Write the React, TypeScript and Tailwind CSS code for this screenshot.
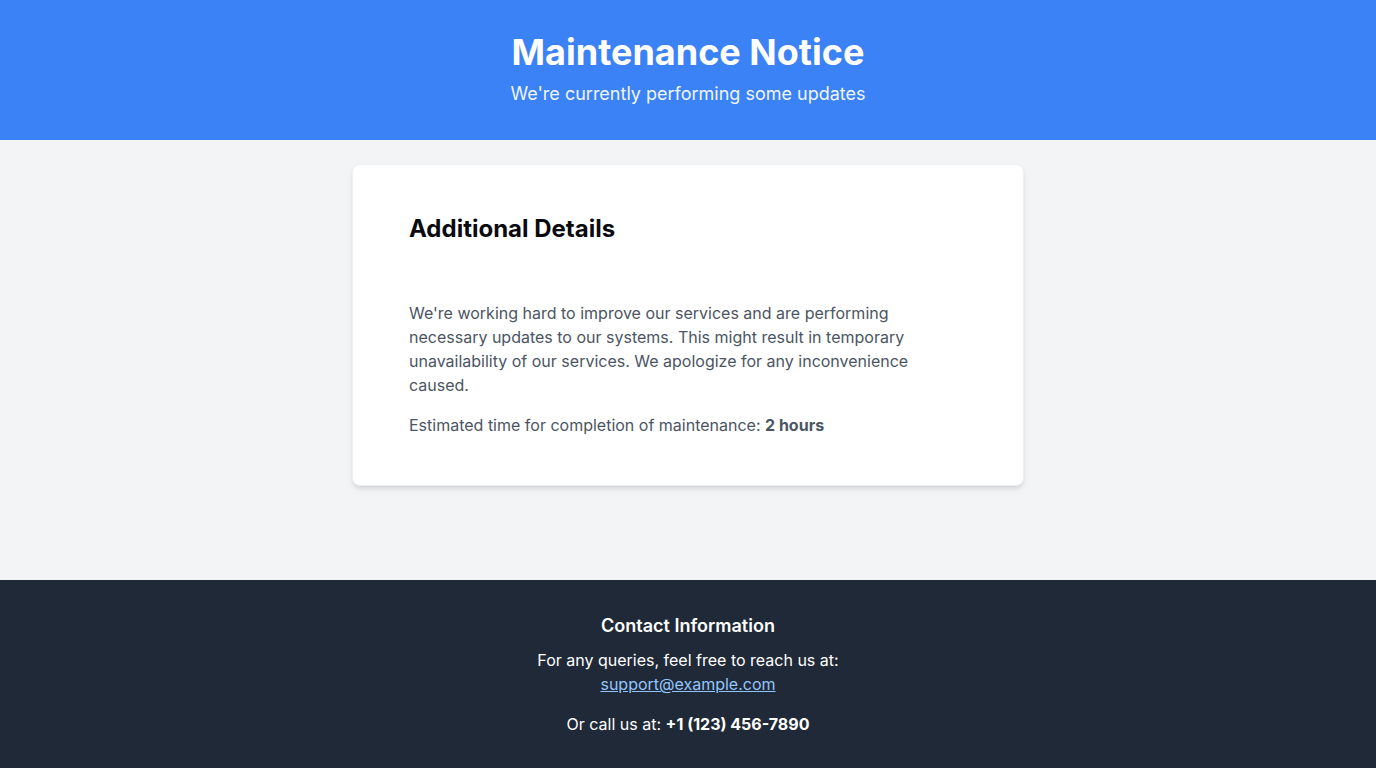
import React from "react";

export default function App() {
  return (
    <div className="min-h-screen flex flex-col bg-[#f3f4f6]" style={{ fontFamily: "Inter, 'Noto Sans', sans-serif" }}>
      <header className="bg-[#3b82f6] text-white py-8 text-center">
        <h1 className="text-4xl font-bold">Maintenance Notice</h1>
        <p className="mt-2 text-lg text-[#eff6ff]">We're currently performing some updates</p>
      </header>
      <main className="flex-1 py-6 px-4">
        <div className="max-w-2xl mx-auto bg-white rounded-lg shadow-md border border-[#eef0f3] p-8">
          <div className="px-6 py-4">
            <h2 className="text-2xl font-bold text-[#0b0b0f]">Additional Details</h2>
            <div className="mt-14 text-[#4b5563]">
              <p>
                We're working hard to improve our services and are performing necessary updates to our systems. This might result in temporary unavailability of our services. We apologize for any inconvenience caused.
              </p>
              <p className="mt-4">
                Estimated time for completion of maintenance: <span className="font-bold">2 hours</span>
              </p>
            </div>
          </div>
        </div>
      </main>
      <footer className="bg-[#1f2937] text-white py-8 text-center">
        <h3 className="text-lg font-semibold mb-2">Contact Information</h3>
        <p>
          For any queries, feel free to reach us at:
          <br />
          <a href="#" className="text-[#93c5fd] underline">support@example.com</a>
        </p>
        <p className="mt-4">
          Or call us at: <span className="font-bold">+1 (123) 456-7890</span>
        </p>
      </footer>
    </div>
  );
}
